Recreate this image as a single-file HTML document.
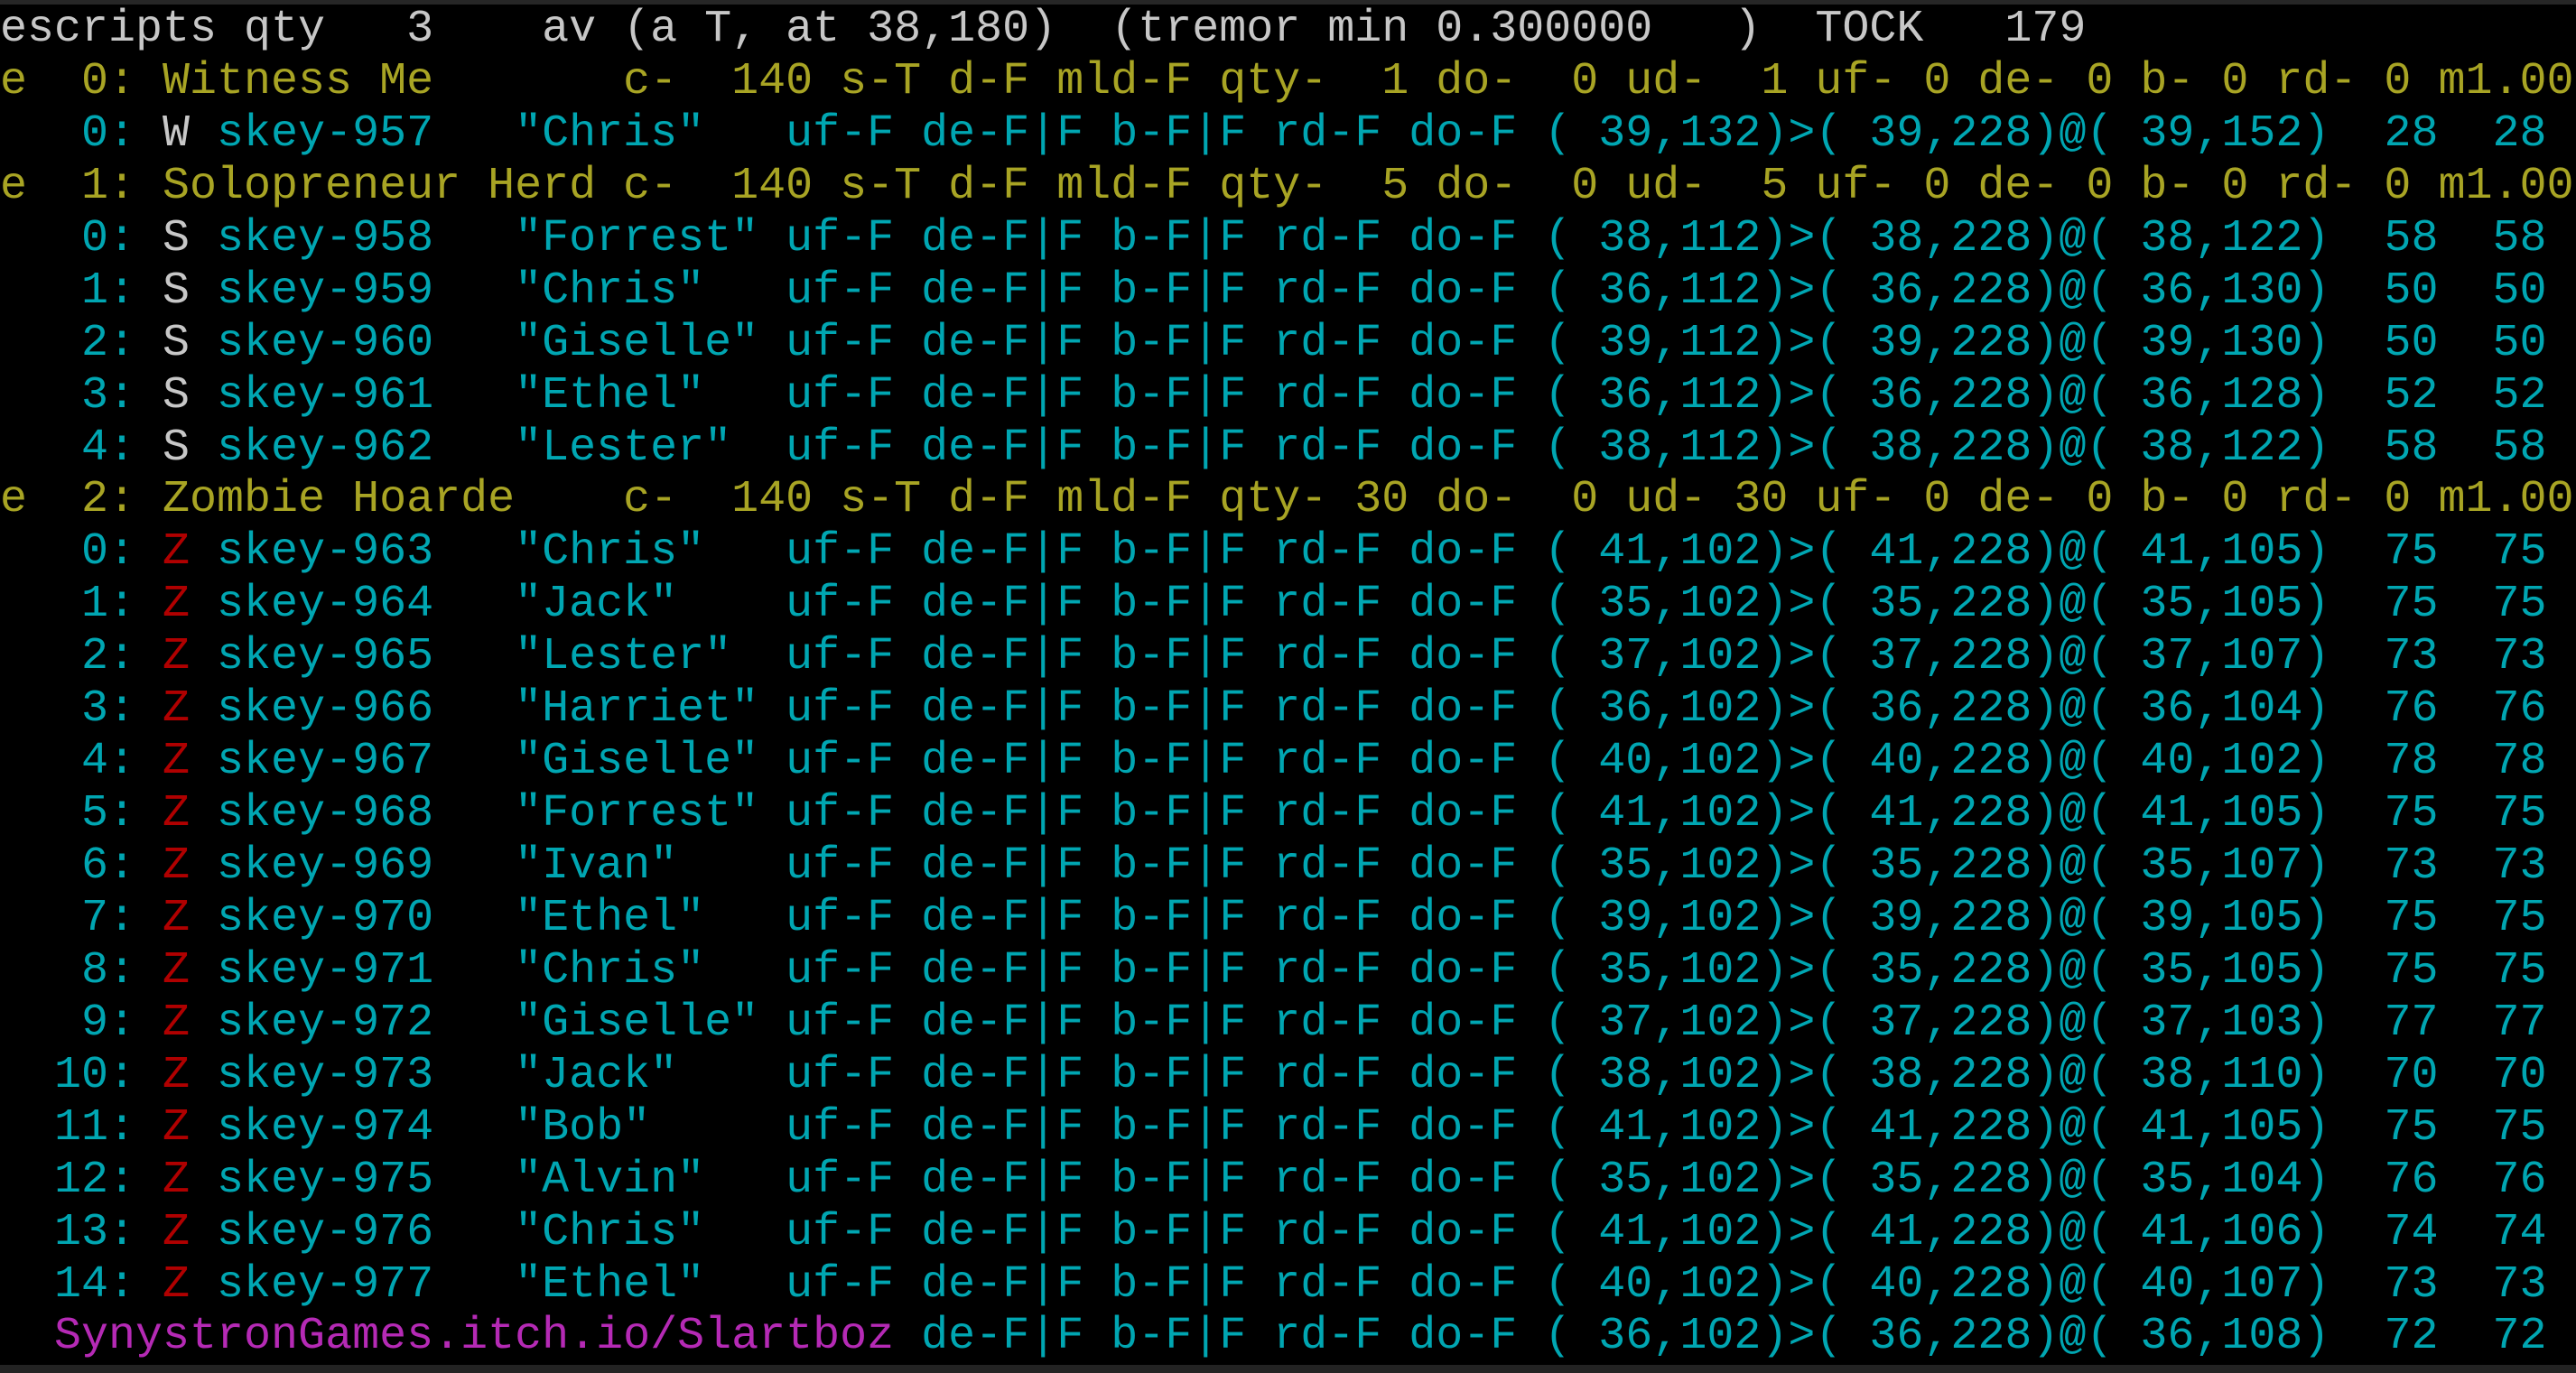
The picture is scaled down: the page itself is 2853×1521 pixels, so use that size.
<!DOCTYPE html>
<html><head><meta charset="utf-8"><style>
html,body{margin:0;padding:0;background:#000;width:2853px;height:1521px;overflow:hidden;}
#t{position:absolute;left:0;top:4px;margin:0;font-family:"Liberation Mono",monospace;font-size:50px;line-height:57.93px;color:#c7c7c7;white-space:pre;}
.top{position:absolute;left:0;top:0;width:2853px;height:5px;background:#262626;}
.bot{position:absolute;left:0;top:1512px;width:2853px;height:9px;background:#232323;}
.y{color:#a8a424}.c{color:#00a6b2}.w{color:#c7c7c7}.r{color:#b00000}.m{color:#b52ab5}
</style></head><body>
<div class="top"></div>
<pre id="t">escripts qty   3    av (a T, at 38,180)  (tremor min 0.300000   )  TOCK   179
<span class="y">e  0: Witness Me       c-  140 s-T d-F mld-F qty-  1 do-  0 ud-  1 uf- 0 de- 0 b- 0 rd- 0 m1.00</span>
<span class="c">   0: </span><span class="w">W</span><span class="c"> skey-957   "Chris"   uf-F de-F|F b-F|F rd-F do-F ( 39,132)>( 39,228)@( 39,152)  28  28</span>
<span class="y">e  1: Solopreneur Herd c-  140 s-T d-F mld-F qty-  5 do-  0 ud-  5 uf- 0 de- 0 b- 0 rd- 0 m1.00</span>
<span class="c">   0: </span><span class="w">S</span><span class="c"> skey-958   "Forrest" uf-F de-F|F b-F|F rd-F do-F ( 38,112)>( 38,228)@( 38,122)  58  58</span>
<span class="c">   1: </span><span class="w">S</span><span class="c"> skey-959   "Chris"   uf-F de-F|F b-F|F rd-F do-F ( 36,112)>( 36,228)@( 36,130)  50  50</span>
<span class="c">   2: </span><span class="w">S</span><span class="c"> skey-960   "Giselle" uf-F de-F|F b-F|F rd-F do-F ( 39,112)>( 39,228)@( 39,130)  50  50</span>
<span class="c">   3: </span><span class="w">S</span><span class="c"> skey-961   "Ethel"   uf-F de-F|F b-F|F rd-F do-F ( 36,112)>( 36,228)@( 36,128)  52  52</span>
<span class="c">   4: </span><span class="w">S</span><span class="c"> skey-962   "Lester"  uf-F de-F|F b-F|F rd-F do-F ( 38,112)>( 38,228)@( 38,122)  58  58</span>
<span class="y">e  2: Zombie Hoarde    c-  140 s-T d-F mld-F qty- 30 do-  0 ud- 30 uf- 0 de- 0 b- 0 rd- 0 m1.00</span>
<span class="c">   0: </span><span class="r">Z</span><span class="c"> skey-963   "Chris"   uf-F de-F|F b-F|F rd-F do-F ( 41,102)>( 41,228)@( 41,105)  75  75</span>
<span class="c">   1: </span><span class="r">Z</span><span class="c"> skey-964   "Jack"    uf-F de-F|F b-F|F rd-F do-F ( 35,102)>( 35,228)@( 35,105)  75  75</span>
<span class="c">   2: </span><span class="r">Z</span><span class="c"> skey-965   "Lester"  uf-F de-F|F b-F|F rd-F do-F ( 37,102)>( 37,228)@( 37,107)  73  73</span>
<span class="c">   3: </span><span class="r">Z</span><span class="c"> skey-966   "Harriet" uf-F de-F|F b-F|F rd-F do-F ( 36,102)>( 36,228)@( 36,104)  76  76</span>
<span class="c">   4: </span><span class="r">Z</span><span class="c"> skey-967   "Giselle" uf-F de-F|F b-F|F rd-F do-F ( 40,102)>( 40,228)@( 40,102)  78  78</span>
<span class="c">   5: </span><span class="r">Z</span><span class="c"> skey-968   "Forrest" uf-F de-F|F b-F|F rd-F do-F ( 41,102)>( 41,228)@( 41,105)  75  75</span>
<span class="c">   6: </span><span class="r">Z</span><span class="c"> skey-969   "Ivan"    uf-F de-F|F b-F|F rd-F do-F ( 35,102)>( 35,228)@( 35,107)  73  73</span>
<span class="c">   7: </span><span class="r">Z</span><span class="c"> skey-970   "Ethel"   uf-F de-F|F b-F|F rd-F do-F ( 39,102)>( 39,228)@( 39,105)  75  75</span>
<span class="c">   8: </span><span class="r">Z</span><span class="c"> skey-971   "Chris"   uf-F de-F|F b-F|F rd-F do-F ( 35,102)>( 35,228)@( 35,105)  75  75</span>
<span class="c">   9: </span><span class="r">Z</span><span class="c"> skey-972   "Giselle" uf-F de-F|F b-F|F rd-F do-F ( 37,102)>( 37,228)@( 37,103)  77  77</span>
<span class="c">  10: </span><span class="r">Z</span><span class="c"> skey-973   "Jack"    uf-F de-F|F b-F|F rd-F do-F ( 38,102)>( 38,228)@( 38,110)  70  70</span>
<span class="c">  11: </span><span class="r">Z</span><span class="c"> skey-974   "Bob"     uf-F de-F|F b-F|F rd-F do-F ( 41,102)>( 41,228)@( 41,105)  75  75</span>
<span class="c">  12: </span><span class="r">Z</span><span class="c"> skey-975   "Alvin"   uf-F de-F|F b-F|F rd-F do-F ( 35,102)>( 35,228)@( 35,104)  76  76</span>
<span class="c">  13: </span><span class="r">Z</span><span class="c"> skey-976   "Chris"   uf-F de-F|F b-F|F rd-F do-F ( 41,102)>( 41,228)@( 41,106)  74  74</span>
<span class="c">  14: </span><span class="r">Z</span><span class="c"> skey-977   "Ethel"   uf-F de-F|F b-F|F rd-F do-F ( 40,102)>( 40,228)@( 40,107)  73  73</span>
  <span class="m">SynystronGames.itch.io/Slartboz</span><span class="c"> de-F|F b-F|F rd-F do-F ( 36,102)>( 36,228)@( 36,108)  72  72</span></pre>
<div class="bot"></div>
</body></html>
